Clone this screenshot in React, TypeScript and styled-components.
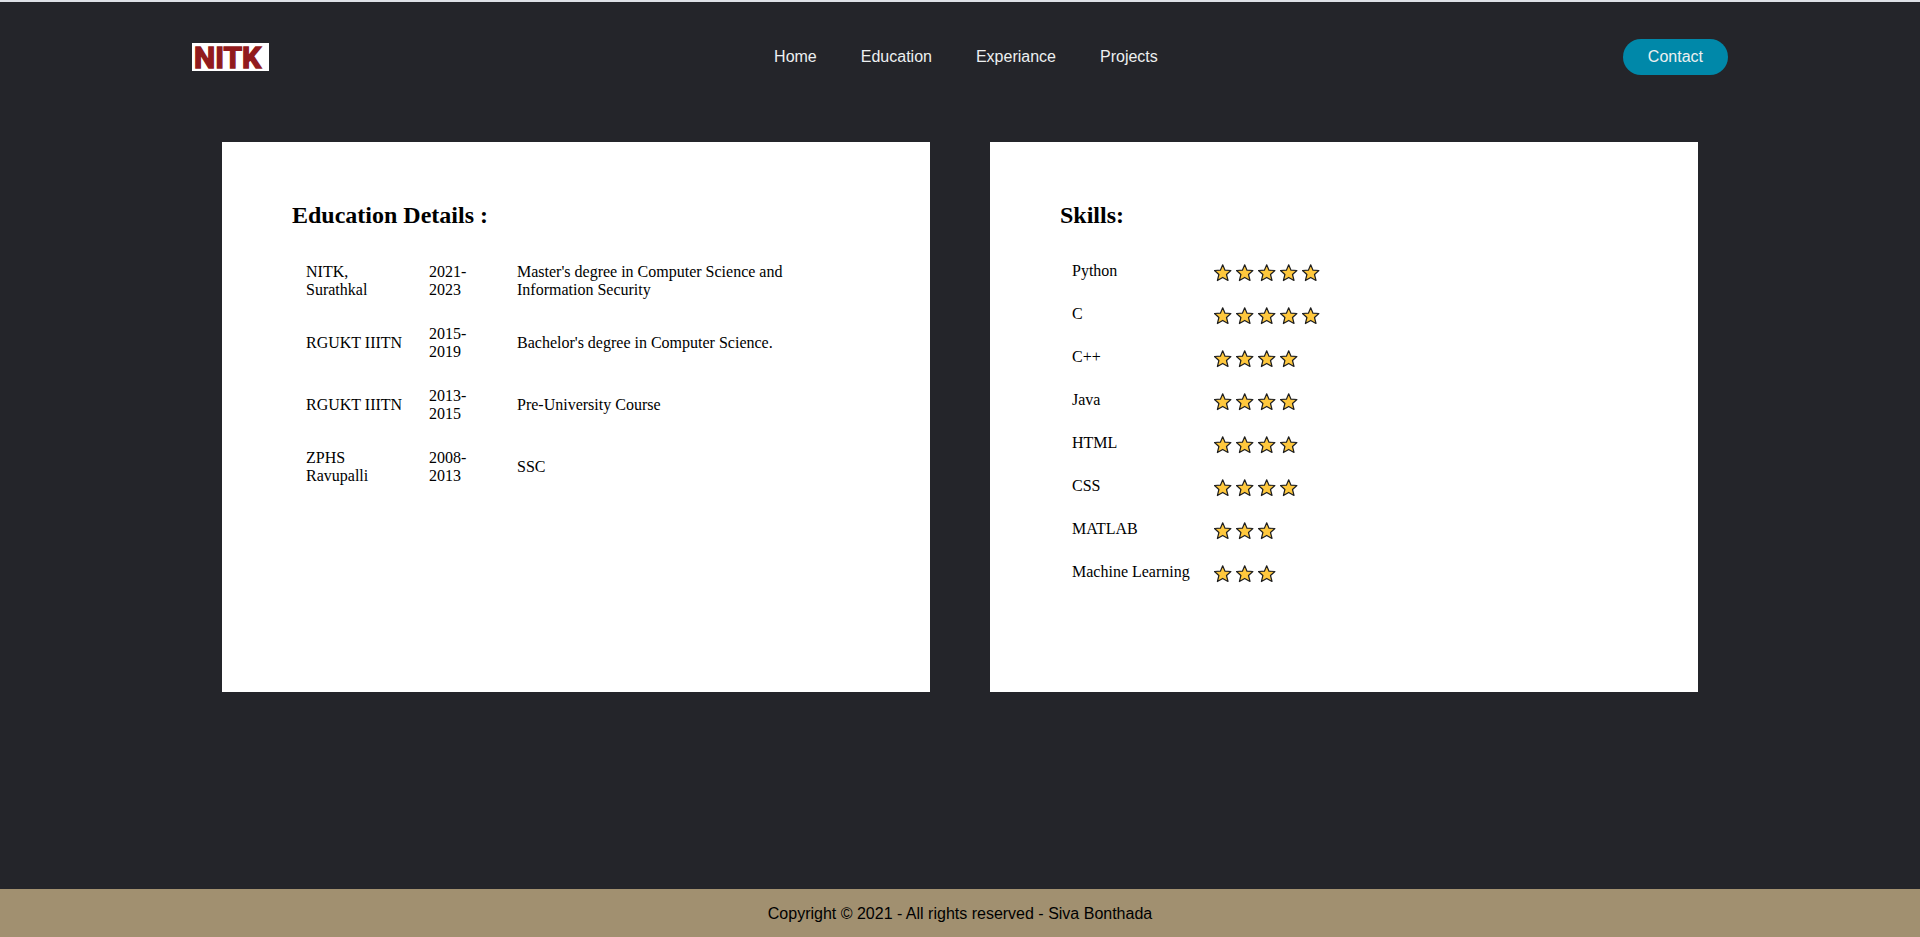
import React from "react";
import styled, { createGlobalStyle } from "styled-components";

const GlobalStyle = createGlobalStyle`
  *, *::before, *::after { box-sizing: border-box; }
  body { margin: 0; background: #24252a; }
`;

const sans = `"Liberation Sans", Arial, sans-serif`;
const serif = `"Liberation Serif", "Times New Roman", serif`;

const Page = styled.div`
  display: flex;
  flex-direction: column;
  min-height: 100vh;
  border-top: 2px solid #dee1e6;
  background: #24252a;
`;

const Header = styled.header`
  display: flex;
  justify-content: space-between;
  align-items: center;
  height: 110px;
  padding: 0 10%;
  font: 16px/18px ${sans};
`;

const LogoLink = styled.a`
  display: block;
  width: 77px;
  height: 28px;
  background: #fff;
`;

const LogoImage = styled.svg`
  display: block;
  overflow: visible;
`;

const NavList = styled.ul`
  display: flex;
  gap: 44px;
  margin: 0;
  padding: 0 0 0 40px;
  list-style: none;
`;

const NavLink = styled.a`
  color: #edf0f1;
  text-decoration: none;
`;

const ContactButton = styled.button`
  height: 36px;
  padding: 0 25px;
  border: 0;
  border-radius: 50px;
  background: #0088a9;
  color: #edf0f1;
  font: inherit;
  cursor: pointer;
`;

const Main = styled.main`
  display: grid;
  grid-template-columns: 1fr 1fr;
  gap: 60px;
  align-items: start;
  flex: 1;
  margin: 0 10%;
  padding: 30px 30px 60px;
`;

const Card = styled.section`
  min-height: 550px;
  padding: 60px 70px;
  background: #fff;
  color: #000;
  font: 16px/18px ${serif};
`;

const CardTitle = styled.h2`
  margin: 0 0 21px;
  font-size: 24px;
  line-height: 27px;
`;

const EducationTable = styled.table`
  border-collapse: collapse;

  td {
    padding: 13px 10px 13px 14px;
    vertical-align: middle;
  }
`;

const SchoolCell = styled.td`
  width: 123px;
`;

const YearsCell = styled.td`
  width: 88px;
`;

const SkillsTable = styled.table`
  border-collapse: collapse;

  td {
    height: 43px;
    padding: 0 12px 2px;
    vertical-align: middle;
  }
`;

const Stars = styled.div`
  display: flex;
  gap: 4px;
  padding-top: 4px;
`;

const StarIcon = styled.svg`
  display: block;
  width: 18px;
  height: 18px;
`;

const Footer = styled.footer`
  padding: 16px 15px 14px;
  background: #a19070;
  color: #000;
  font: 16px/18px ${sans};
  text-align: center;
`;

const links = ["Home", "Education", "Experiance", "Projects"];

const education = [
  ["NITK, Surathkal", "2021-2023", "Master's degree in Computer Science and Information Security"],
  ["RGUKT IIITN", "2015-2019", "Bachelor's degree in Computer Science."],
  ["RGUKT IIITN", "2013-2015", "Pre-University Course"],
  ["ZPHS Ravupalli", "2008-2013", "SSC"],
];

const skills: [string, number][] = [
  ["Python", 5],
  ["C", 5],
  ["C++", 4],
  ["Java", 4],
  ["HTML", 4],
  ["CSS", 4],
  ["MATLAB", 3],
  ["Machine Learning", 3],
];

function Star() {
  return (
    <StarIcon viewBox="0 0 18 18" aria-hidden="true">
      <path
        d="M8.7 0.8 L11 6.2 L16.9 6.5 L12.5 10.5 L14 16.5 L8.7 13.4 L3.4 16.5 L4.9 10.5 L0.5 6.5 L6.4 6.2 Z"
        fill="#ffc83d"
        stroke="#1f1f1f"
        strokeWidth="1.2"
        strokeLinejoin="round"
      />
    </StarIcon>
  );
}

function Logo() {
  return (
    <LogoImage width="77" height="28" viewBox="0 0 77 28" role="img" aria-label="NITK">
      <text
        x="2"
        y="25"
        fill="#911a1c"
        stroke="#911a1c"
        strokeWidth="1.4"
        fontFamily="Roboto, sans-serif"
        fontWeight="700"
        fontSize="30"
      >
        NITK
      </text>
    </LogoImage>
  );
}

export default function App() {
  return (
    <>
      <GlobalStyle />
      <Page>
        <Header>
          <LogoLink href="#home">
            <Logo />
          </LogoLink>
          <nav>
            <NavList>
              {links.map((link) => (
                <li key={link}>
                  <NavLink href={`#${link.toLowerCase()}`}>{link}</NavLink>
                </li>
              ))}
            </NavList>
          </nav>
          <ContactButton type="button">Contact</ContactButton>
        </Header>
        <Main>
          <Card>
            <CardTitle>Education Details :</CardTitle>
            <EducationTable>
              <tbody>
                {education.map(([school, years, course]) => (
                  <tr key={years}>
                    <SchoolCell>{school}</SchoolCell>
                    <YearsCell>{years}</YearsCell>
                    <td>{course}</td>
                  </tr>
                ))}
              </tbody>
            </EducationTable>
          </Card>
          <Card>
            <CardTitle>Skills:</CardTitle>
            <SkillsTable>
              <tbody>
                {skills.map(([skill, count]) => (
                  <tr key={skill}>
                    <td>{skill}</td>
                    <td>
                      <Stars role="img" aria-label={`${count} stars`}>
                        {Array.from({ length: count }, (_, i) => (
                          <Star key={i} />
                        ))}
                      </Stars>
                    </td>
                  </tr>
                ))}
              </tbody>
            </SkillsTable>
          </Card>
        </Main>
        <Footer>Copyright © 2021 - All rights reserved - Siva Bonthada</Footer>
      </Page>
    </>
  );
}
